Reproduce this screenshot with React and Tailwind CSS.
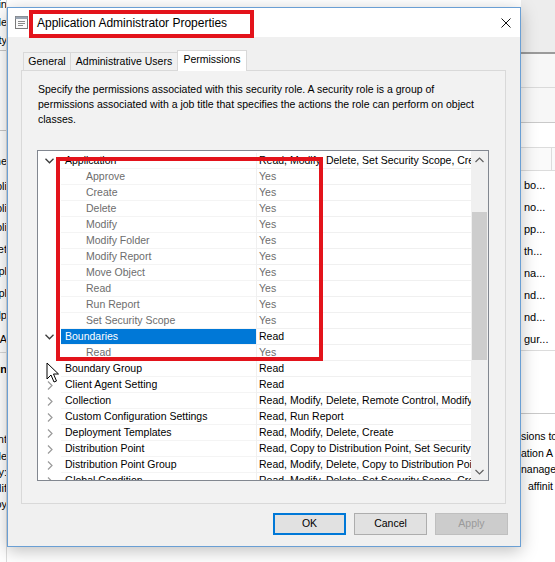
import { useState } from 'react'

const TREE = [
  { label: 'Application', value: 'Read, Modify, Delete, Set Security Scope, Create', open: true },
  { label: 'Approve', value: 'Yes', child: true },
  { label: 'Create', value: 'Yes', child: true },
  { label: 'Delete', value: 'Yes', child: true },
  { label: 'Modify', value: 'Yes', child: true },
  { label: 'Modify Folder', value: 'Yes', child: true },
  { label: 'Modify Report', value: 'Yes', child: true },
  { label: 'Move Object', value: 'Yes', child: true },
  { label: 'Read', value: 'Yes', child: true },
  { label: 'Run Report', value: 'Yes', child: true },
  { label: 'Set Security Scope', value: 'Yes', child: true },
  { label: 'Boundaries', value: 'Read', open: true, selected: true },
  { label: 'Read', value: 'Yes', child: true },
  { label: 'Boundary Group', value: 'Read' },
  { label: 'Client Agent Setting', value: 'Read' },
  { label: 'Collection', value: 'Read, Modify, Delete, Remote Control, Modify Resource' },
  { label: 'Custom Configuration Settings', value: 'Read, Run Report' },
  { label: 'Deployment Templates', value: 'Read, Modify, Delete, Create' },
  { label: 'Distribution Point', value: 'Read, Copy to Distribution Point, Set Security Scope' },
  { label: 'Distribution Point Group', value: 'Read, Modify, Delete, Copy to Distribution Point' },
  { label: 'Global Condition', value: 'Read, Modify, Delete, Set Security Scope, Create' },
]

const LEFT_BITS = [
  { y: -4, t: 'Admin' }, { y: 14, t: 'Role' }, { y: 32, t: 'Security' },
  { y: 153, t: 'Name' }, { y: 178, t: 'Appli' }, { y: 200, t: 'Appli' }, { y: 219, t: 'Appli' },
  { y: 241, t: 'Asset' }, { y: 263, t: 'Compl' }, { y: 285, t: 'Compl' }, { y: 307, t: 'Endp' },
  { y: 331, t: 'Full A' }, { y: 361, t: 'Admin', bold: true },
  { y: 431, t: 'grant' }, { y: 448, t: 'role' }, { y: 464, t: 'Modify:' }, { y: 480, t: 'modif' }, { y: 496, t: 'deploy' },
]

const RIGHT_ROWS = ['bo...', 'no...', 'pp...', 'th...', 'na...', 'nd...', 'nd...', 'gur...']

function Chevron({ open }) {
  if (open) {
    return (
      <svg width="9" height="6" viewBox="0 0 9 6">
        <path d="M0.5 0.8 L4.5 4.8 L8.5 0.8" fill="none" stroke="#3c3c3c" strokeWidth="1.3" />
      </svg>
    )
  }
  return (
    <svg width="6" height="9" viewBox="0 0 6 9">
      <path d="M1 0.5 L5 4.5 L1 8.5" fill="none" stroke="#9a9a9a" strokeWidth="1.2" />
    </svg>
  )
}

function TreeRow({ row }) {
  return (
    <div className="flex h-[16px] shrink-0">
      <div className="w-[23px] flex items-center justify-center">
        {!row.child && <Chevron open={row.open} />}
      </div>
      <div
        className={`w-[195px] flex items-center border-b border-[#f4f4f4] whitespace-nowrap overflow-hidden ${
          row.child ? 'pl-[25px] text-[#6d6d6d]' : 'pl-[4px] text-black'
        } ${row.selected ? 'bg-[#0078d7] text-white border-[#0078d7]' : ''}`}
      >
        {row.label}
      </div>
      <div
        className={`flex-1 flex items-center pl-[2px] border-l border-b border-[#f0f0f0] whitespace-nowrap overflow-hidden ${
          row.child ? 'text-[#6d6d6d]' : 'text-black'
        }`}
      >
        {row.value}
      </div>
    </div>
  )
}

function ScrollBar() {
  return (
    <div className="w-[17px] bg-[#f0f0f0] flex flex-col">
      <div className="h-[17px] flex items-center justify-center">
        <svg width="9" height="6" viewBox="0 0 9 6">
          <path d="M0.5 5 L4.5 1 L8.5 5" fill="none" stroke="#606060" strokeWidth="1.2" />
        </svg>
      </div>
      <div className="mt-[44px] mx-[1px] h-[148px] bg-[#cdcdcd]" />
      <div className="flex-1" />
      <div className="h-[17px] flex items-center justify-center">
        <svg width="9" height="6" viewBox="0 0 9 6">
          <path d="M0.5 1 L4.5 5 L8.5 1" fill="none" stroke="#606060" strokeWidth="1.2" />
        </svg>
      </div>
    </div>
  )
}

function Dialog() {
  const [tab] = useState('Permissions')
  const tabs = [
    { name: 'General', w: 'w-[47px]' },
    { name: 'Administrative Users', w: 'w-[107px]' },
    { name: 'Permissions', w: 'w-[70px]' },
  ]

  return (
    <div className="absolute left-[7px] top-[7px] w-[514px] h-[540px] border border-[#6a9fd4] bg-[#f0f0f0] shadow-[0_4px_16px_rgba(0,0,0,0.25)] flex flex-col">
      {/* Title bar */}
      <div className="h-[29px] bg-white flex items-center justify-between pl-[7px] pr-[9px]">
        <div className="flex items-center gap-[9px]">
          <svg width="13" height="13" viewBox="0 0 13 13">
            <rect x="0.5" y="0.5" width="12" height="12" fill="#fafafa" stroke="#7a7a7a" />
            <rect x="0.5" y="0.5" width="12" height="2.5" fill="#9aa6b4" />
            <path d="M3 5.5 H10 M3 7.5 H10 M3 9.5 H8" stroke="#8a8a8a" strokeWidth="1" />
          </svg>
          <span className="text-[12px] text-black">Application Administrator Properties</span>
        </div>
        <svg width="10" height="10" viewBox="0 0 10 10">
          <path d="M0.5 0.5 L9.5 9.5 M9.5 0.5 L0.5 9.5" stroke="#111" strokeWidth="1" />
        </svg>
      </div>

      <div className="px-[13px] pt-[12px] flex flex-col">
        {/* Tabs */}
        <div className="h-[21px] flex items-end pl-[2px]">
          {tabs.map(t =>
            t.name === tab ? (
              <div
                key={t.name}
                className={`${t.w} h-[21px] -mb-px relative z-10 bg-white border border-b-0 border-[#d9d9d9] flex items-center justify-center pb-[2px]`}
              >
                {t.name}
              </div>
            ) : (
              <div
                key={t.name}
                className={`${t.w} h-[18px] bg-[#f0f0f0] border border-b-0 border-r-0 border-[#d9d9d9] flex items-center justify-center`}
              >
                {t.name}
              </div>
            )
          )}
        </div>

        {/* Tab page */}
        <div className="w-[485px] h-[434px] border border-[#d9d9d9] bg-[#f2f2f2] flex flex-col">
          <p className="pt-[11px] pl-[16px] leading-[15px] text-black">
            Specify the permissions associated with this security role. A security role is a group of
            <br />
            permissions associated with a job title that specifies the actions the role can perform on object
            <br />
            classes.
          </p>

          <div className="mt-[23px] ml-[15px] w-[452px] h-[331px] border border-[#828790] bg-white flex">
            <div className="flex-1 pt-[2px] flex flex-col overflow-hidden">
              {TREE.map((row, i) => (
                <TreeRow key={i} row={row} />
              ))}
            </div>
            <ScrollBar />
          </div>
        </div>

        {/* Buttons */}
        <div className="mt-[9px] flex justify-end gap-[8px] -mr-px">
          <button className="w-[73px] h-[22px] bg-[#e1e1e1] border border-[#0078d7] shadow-[inset_0_0_0_1px_#0078d7] text-black">
            OK
          </button>
          <button className="w-[73px] h-[22px] bg-[#e1e1e1] border border-[#adadad] text-black">
            Cancel
          </button>
          <button className="w-[73px] h-[22px] bg-[#cccccc] border border-[#bfbfbf] text-[#9a9a9a]">
            Apply
          </button>
        </div>
      </div>
    </div>
  )
}

function Cursor() {
  return (
    <svg className="absolute left-[46px] top-[362px]" width="14" height="22" viewBox="0 0 14 22">
      <path
        d="M1 1 L1 17 L5 13 L8 20 L10.5 19 L7.5 12 L12.5 12 Z"
        fill="#fff"
        stroke="#000"
        strokeWidth="1"
        strokeLinejoin="round"
      />
    </svg>
  )
}

export default function App() {
  return (
    <div
      className="relative w-[555px] h-[562px] overflow-hidden bg-white text-[10.5px]"
      style={{ fontFamily: '"Liberation Sans", Arial, sans-serif' }}
    >
      {/* Background console window */}
      <div className="flex h-full">
        <div className="w-[7px] relative overflow-hidden bg-white border-r border-[#dcdcdc]">
          <div className="absolute left-0 right-0 top-[50px] h-px bg-[#c8c8c8]" />
          <div className="absolute left-0 right-0 top-[130px] h-px bg-[#c8c8c8]" />
          <div className="absolute left-0 right-0 top-[352px] h-px bg-[#d8d8d8]" />
          {LEFT_BITS.map((b, i) => (
            <div
              key={i}
              className={`absolute right-[-1px] flex justify-end whitespace-nowrap text-[11px] ${b.bold ? 'font-bold' : ''}`}
              style={{ top: b.y }}
            >
              {b.t}
            </div>
          ))}
        </div>
        <div className="flex-1" />
        <div className="w-[34px] flex flex-col text-[11px] text-black">
          <div className="h-[52px] bg-[#ededed]" />
          <div className="h-[2px] bg-[#9b9b9b]" />
          <div className="h-[34px] bg-[#f7f7f7] border-b border-[#dadada]" />
          <div className="h-[35px] bg-[#f7f7f7] border-b border-[#c9c9c9]" />
          <div className="h-[24px] bg-white" />
          <div className="h-[24px] bg-[#fafafa] border-y border-[#dcdcdc] flex justify-end">
            <div className="w-[4px] border-l border-[#dcdcdc]" />
          </div>
          <div className="pt-[3px] flex flex-col">
            {RIGHT_ROWS.map((r, i) => (
              <div key={i} className="h-[22px] flex items-center pl-[3px] whitespace-nowrap">
                {r}
              </div>
            ))}
          </div>
          <div className="h-px bg-[#dcdcdc]" />
          <div className="h-[62px]" />
          <div className="h-px bg-[#c9c9c9]" />
          <div className="pt-[14px] leading-[16.5px] whitespace-nowrap text-[10.5px]">
            <div>sions to</div>
            <div>ation A</div>
            <div>nanage</div>
            <div className="pl-[7px]">affinit</div>
          </div>
        </div>
      </div>

      <Dialog />

      {/* Annotation boxes */}
      <div className="absolute left-[29px] top-[10px] w-[225px] h-[28px] border-[4px] border-[#e3131b]" />
      <div className="absolute left-[56px] top-[157px] w-[267px] h-[204px] border-[4px] border-[#e3131b]" />

      <Cursor />
    </div>
  )
}
